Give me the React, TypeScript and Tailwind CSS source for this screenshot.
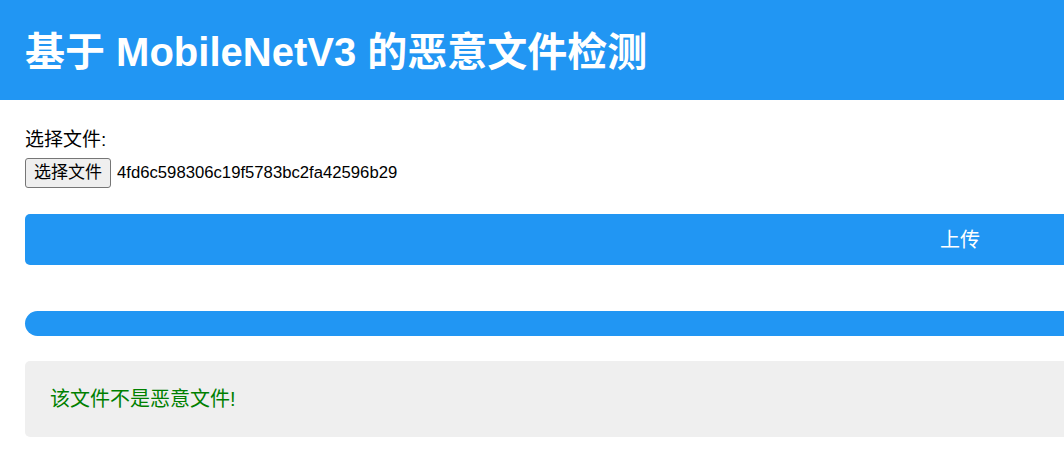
const fontStack = "font-['Liberation_Sans','Noto_Sans_CJK_SC',sans-serif]"

export default function App() {
  return (
    <div className={`w-full h-[475px] overflow-hidden bg-white ${fontStack}`}>
      <div className="w-[1920px]">
        <header className="h-[100px] bg-[#2196F3] flex items-center px-[25px] pt-[4px]">
          <h1 className="text-[40px] leading-[48px] font-bold text-white">基于 MobileNetV3 的恶意文件检测</h1>
        </header>

        <main className="px-[25px]">
          <label className="block pt-[28px] text-[19px] leading-[24px] text-black">选择文件:</label>

          <div className="mt-[6px] flex items-center">
            <span className="h-[30px] flex items-center px-[8px] border border-[#767676] rounded-[3px] bg-[#efefef] text-[17px] text-black">
              选择文件
            </span>
            <span className="ml-[6px] text-[16.7px] text-black">4fd6c598306c19f5783bc2fa42596b29</span>
          </div>

          <button
            type="button"
            className="mt-[26px] w-full h-[51px] rounded-[5px] bg-[#2196F3] text-white text-[20px] flex items-center justify-center"
          >
            上传
          </button>

          <div className="mt-[46px] h-[25px] rounded-full bg-[#2196F3]" />

          <div className="mt-[25px] rounded-[5px] bg-[#efefef] p-[25px]">
            <p className="text-[20px] leading-[26px] text-[#008000]">该文件不是恶意文件!</p>
          </div>
        </main>
      </div>
    </div>
  )
}
